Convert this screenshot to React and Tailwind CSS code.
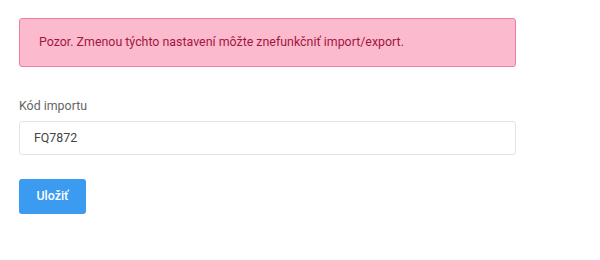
import React from 'react';

const App = () => {
    return (
        <div className="w-[600px] h-[260px] bg-white pt-[18px] pl-[19px]" style={{ fontFamily: 'Roboto, "Liberation Sans", sans-serif' }}>
            <div className="w-[497px]">
                {/* Warning */}
                <div className="h-[49px] flex items-center pl-[19px] bg-[#fbbacd] border border-[#ec7fa1] rounded-[3px] text-[12.4px] text-[#a3163f]">
                    Pozor. Zmenou týchto nastavení môžte znefunkčniť import/export.
                </div>

                {/* Import code */}
                <div className="mt-[31px]">
                    <label className="block text-[12.4px] text-[#666] leading-[16px]">Kód importu</label>
                    <div className="mt-[7px] w-full h-[34px] flex items-center pl-[14px] border border-[#e3e3e3] rounded-[3px] text-[12.4px] text-[#444]">
                        FQ7872
                    </div>
                </div>

                <button className="mt-[24px] w-[67px] h-[35px] bg-[#3b9bf0] rounded-[3px] text-white text-[12.4px] font-medium">
                    Uložiť
                </button>
            </div>
        </div>
    );
};

export default App;
